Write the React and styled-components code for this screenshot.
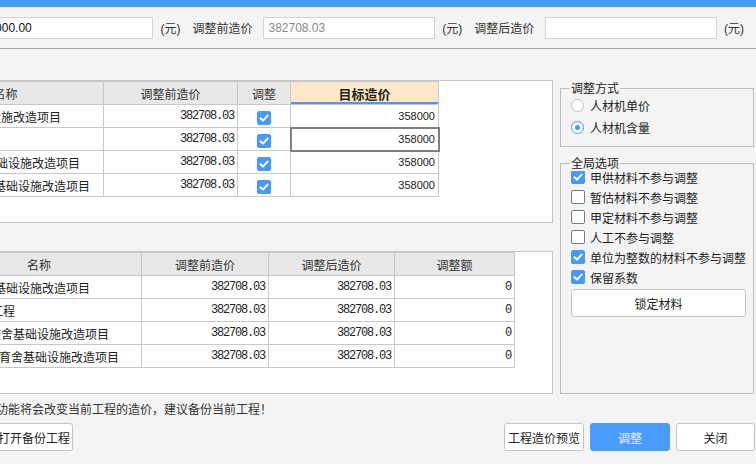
import React from 'react';
import styled, {createGlobalStyle, css} from 'styled-components';

const GlobalStyle = createGlobalStyle`
  html, body {
    margin: 0;
    padding: 0;
    background: #f4f4f4;
  }
  body {
    width: 756px;
    height: 464px;
    overflow: hidden;
    font-family: "Liberation Sans", "Noto Sans CJK SC", sans-serif;
    font-size: 12px;
    color: #222;
  }
`;

const blue = '#4599ff';

const Dialog = styled.div`
  width: 886px;
  height: 464px;
  margin-left: -130px;
  display: flex;
  flex-direction: column;
`;

const TitleBar = styled.div`
  height: 7px;
  background: ${blue};
`;

const TopBar = styled.div`
  height: 41px;
  display: flex;
  align-items: center;
  padding-left: 41px;
  border-bottom: 1px solid #a9a9a9;
`;

const Label = styled.span`
  color: #333;
  margin-right: 11px;
  white-space: nowrap;
`;

const Input = styled.div`
  box-sizing: border-box;
  width: ${p => p.width || 176}px;
  height: 22px;
  line-height: 20px;
  padding: 0 4px;
  background: #fff;
  border: 1px solid #d3d3d3;
  color: ${p => (p.muted ? '#8a8a8a' : '#111')};
  font-size: 12px;
  white-space: nowrap;
`;

const Unit = styled.span`
  color: #333;
  margin: 0 12px 0 7px;
`;

const Body = styled.div`
  height: 345px;
  display: flex;
  gap: 7px;
  padding: 0 2px 0 10px;
`;

const LeftCol = styled.div`
  width: 673px;
  display: flex;
  flex-direction: column;
`;

const Panel = styled.div`
  box-sizing: border-box;
  height: 143px;
  margin-top: ${p => p.top}px;
  background: #fff;
  border: 1px solid #c6c6c6;
  overflow: hidden;
`;

const Table = styled.table`
  border-collapse: collapse;
  table-layout: fixed;
  font-family: "Noto Sans CJK SC", sans-serif;
  font-size: 12px;
  color: #222;

  th, td {
    border: 1px solid #c8c8c8;
    height: 22px;
    padding: 0;
    white-space: nowrap;
    overflow: hidden;
  }
  th {
    background: #e8e8e8;
    font-weight: normal;
    color: #333;
  }
`;

const HeadCell = styled.th`
  ${p => p.target && css`
    && {
      background: #fde8c9;
      box-shadow: inset 0 -2px 0 ${blue};
      font-weight: bold;
      font-size: 13px;
      color: #222;
    }
  `}
`;

const NameCell = styled.td`
  text-align: left;
  && { padding-left: ${p => p.indent}px; }
`;

const NumCell = styled.td`
  text-align: right;
  && { padding-right: 3px; }
  font-family: "Liberation Mono", monospace;
  font-size: 12px;
  letter-spacing: -1.2px;
  color: #222;
`;

const TargetCell = styled.td`
  text-align: right;
  && { padding-right: 3px; }
  font-family: "Liberation Sans", sans-serif;
  font-size: 11px;
  color: #222;
  ${p => p.selected && css`
    outline: 2px solid #808080;
    outline-offset: -1px;
  `}
`;

const CenterCell = styled.td`
  text-align: center;
`;

const CheckBox = styled.span`
  box-sizing: border-box;
  display: inline-flex;
  align-items: center;
  justify-content: center;
  width: 14px;
  height: 14px;
  border-radius: 2px;
  vertical-align: middle;
  ${p => p.checked ? css`
    background: ${blue};
    border: 1px solid ${blue};
  ` : css`
    background: #fff;
    border: 1px solid #7a7a7a;
  `}
`;

function Check({checked}) {
  return (
    <CheckBox checked={checked}>
      {checked && (
        <svg width="12" height="12" viewBox="0 0 12 12">
          <polyline points="2.5,6.2 5,8.6 9.6,3.6" fill="none" stroke="#fff" strokeWidth="2" strokeLinecap="round" strokeLinejoin="round" />
        </svg>
      )}
    </CheckBox>
  );
}

const RightCol = styled.div`
  width: 194px;
  display: flex;
  flex-direction: column;
`;

const GroupBox = styled.div`
  position: relative;
  box-sizing: border-box;
  height: ${p => p.height}px;
  margin-top: ${p => p.top}px;
  border: 1px solid #bdbdbd;
  padding: ${p => p.padTop}px 7px 0 10px;
  display: flex;
  flex-direction: column;
`;

const GroupTitle = styled.span`
  position: absolute;
  top: -9px;
  left: 9px;
  padding: 0 1px;
  line-height: 16px;
  background: #f4f4f4;
  font-family: "Noto Sans CJK SC", sans-serif;
  color: #222;
`;

const OptionRow = styled.label`
  display: flex;
  align-items: center;
  height: ${p => p.height}px;
  gap: ${p => p.gap}px;
  font-family: "Noto Sans CJK SC", sans-serif;
  color: #222;
  white-space: nowrap;
`;

const RadioDot = styled.span`
  box-sizing: border-box;
  width: 13px;
  height: 13px;
  border-radius: 50%;
  background: #fff;
  border: 1px solid ${p => (p.checked ? blue : '#c2c2c2')};
  display: flex;
  align-items: center;
  justify-content: center;

  &::after {
    content: '';
    width: 5px;
    height: 5px;
    border-radius: 50%;
    background: ${p => (p.checked ? blue : 'transparent')};
  }
`;

const Button = styled.button`
  box-sizing: border-box;
  height: 28px;
  width: ${p => p.width || 80}px;
  padding: 0;
  border-radius: 3px;
  font-family: "Noto Sans CJK SC", sans-serif;
  font-size: 12px;
  cursor: pointer;
  ${p => p.primary ? css`
    background: #4a9dff;
    border: 1px solid #4a9dff;
    color: #eef5ff;
  ` : css`
    background: #fff;
    border: 1px solid #c4c4c4;
    color: #222;
  `}
`;

const LockButton = styled(Button)`
  width: 175px;
  margin-top: 2px;
`;

const Footer = styled.div`
  padding: 0 0 0 10px;
  display: flex;
  flex-direction: column;
`;

const Notice = styled.div`
  margin: 7px 0 0 68px;
  line-height: 16px;
  font-family: "Noto Sans CJK SC", sans-serif;
  color: #333;
  white-space: nowrap;
`;

const ButtonRow = styled.div`
  margin-top: 6px;
  display: flex;
  justify-content: space-between;
  align-items: center;
  padding-left: 115px;
  margin-right: 1px;
`;

const ButtonGroup = styled.div`
  display: flex;
  gap: 6px;
`;

const projects = [
  {name: '城关镇基础设施改造项目', indent: 21},
  {name: '城关学校工程', indent: 6},
  {name: '小学校舍基础设施改造项目', indent: 28},
  {name: '幼儿园保育舍基础设施改造项目', indent: 14},
];

const before = '382708.03';

function TargetTable() {
  return (
    <Table>
      <colgroup>
        <col style={{width: 26}} />
        <col style={{width: 196}} />
        <col style={{width: 134}} />
        <col style={{width: 53}} />
        <col style={{width: 148}} />
      </colgroup>
      <thead>
        <tr>
          <th>序号</th>
          <th>名称</th>
          <th>调整前造价</th>
          <th>调整</th>
          <HeadCell target>目标造价</HeadCell>
        </tr>
      </thead>
      <tbody>
        {projects.map((p, i) => (
          <tr key={i}>
            <CenterCell>{i + 1}</CenterCell>
            <NameCell indent={p.indent}>{p.name}</NameCell>
            <NumCell>{before}</NumCell>
            <CenterCell><Check checked /></CenterCell>
            <TargetCell selected={i === 1}>358000</TargetCell>
          </tr>
        ))}
      </tbody>
    </Table>
  );
}

function ResultTable() {
  return (
    <Table>
      <colgroup>
        <col style={{width: 55}} />
        <col style={{width: 205}} />
        <col style={{width: 127}} />
        <col style={{width: 126}} />
        <col style={{width: 120}} />
      </colgroup>
      <thead>
        <tr>
          <th>序号</th>
          <th>名称</th>
          <th>调整前造价</th>
          <th>调整后造价</th>
          <th>调整额</th>
        </tr>
      </thead>
      <tbody>
        {projects.map((p, i) => (
          <tr key={i}>
            <CenterCell>{i + 1}</CenterCell>
            <NameCell indent={p.indent}>{p.name}</NameCell>
            <NumCell>{before}</NumCell>
            <NumCell>{before}</NumCell>
            <NumCell>0</NumCell>
          </tr>
        ))}
      </tbody>
    </Table>
  );
}

const options = [
  {label: '甲供材料不参与调整', checked: true},
  {label: '暂估材料不参与调整', checked: false},
  {label: '甲定材料不参与调整', checked: false},
  {label: '人工不参与调整', checked: false},
  {label: '单位为整数的材料不参与调整', checked: true},
  {label: '保留系数', checked: true},
];

export default function App() {
  return (
    <>
      <GlobalStyle />
      <Dialog>
        <TitleBar />
        <TopBar>
          <Label>目标造价</Label>
          <Input width={188}>358000.00</Input>
          <Unit>(元)</Unit>
          <Label>调整前造价</Label>
          <Input muted>382708.03</Input>
          <Unit>(元)</Unit>
          <Label>调整后造价</Label>
          <Input />
          <Unit>(元)</Unit>
        </TopBar>
        <Body>
          <LeftCol>
            <Panel top={31}>
              <TargetTable />
            </Panel>
            <Panel top={28}>
              <ResultTable />
            </Panel>
          </LeftCol>
          <RightCol>
            <GroupBox top={39} height={59} padTop={5}>
              <GroupTitle>调整方式</GroupTitle>
              <OptionRow height={22} gap={6}>
                <RadioDot />
                人材机单价
              </OptionRow>
              <OptionRow height={22} gap={6}>
                <RadioDot checked />
                人材机含量
              </OptionRow>
            </GroupBox>
            <GroupBox top={16} height={231} padTop={3}>
              <GroupTitle>全局选项</GroupTitle>
              {options.map(o => (
                <OptionRow key={o.label} height={20} gap={5}>
                  <Check checked={o.checked} />
                  {o.label}
                </OptionRow>
              ))}
              <LockButton>锁定材料</LockButton>
            </GroupBox>
          </RightCol>
        </Body>
        <Footer>
          <Notice>提示：此功能将会改变当前工程的造价，建议备份当前工程！</Notice>
          <ButtonRow>
            <Button width={78}>打开备份工程</Button>
            <ButtonGroup>
              <Button>工程造价预览</Button>
              <Button primary>调整</Button>
              <Button width={79}>关闭</Button>
            </ButtonGroup>
          </ButtonRow>
        </Footer>
      </Dialog>
    </>
  );
}
